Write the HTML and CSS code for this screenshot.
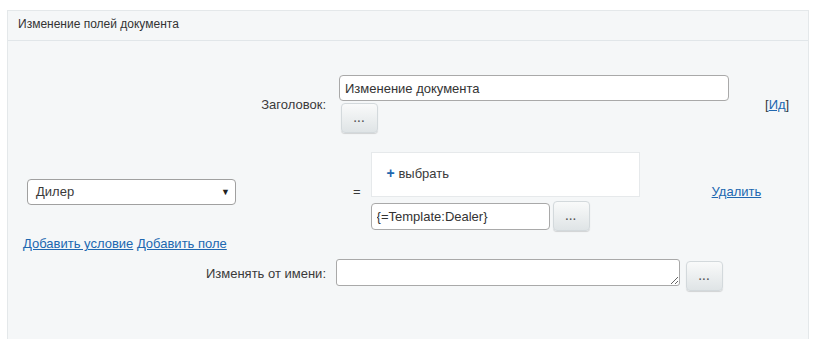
FILE: index.html
```html
<!DOCTYPE html>
<html lang="ru">
<head>
  <meta charset="UTF-8"/>
  <title>Изменение полей документа</title>
  <link rel="stylesheet" href="styles.css">
</head>
<body>
  <div class="panel">
    <div class="panel-head">Изменение полей документа</div>
    <div class="panel-body">
      <div class="row row-title">
        <div class="label">Заголовок:</div>
        <div class="field">
          <input class="text text-title" type="text" value="Изменение документа">
          <button class="btn-dots btn-under">...</button>
        </div>
        <span class="id-link">[<a href="#">Ид</a>]</span>
      </div>
      <div class="row row-cond">
        <div class="select">Дилер<span class="arrow">&#9660;</span></div>
        <div class="eq">=</div>
        <div class="field">
          <div class="picker"><span class="plus">+</span> выбрать</div>
          <div class="inline">
            <input class="text text-value" type="text" value="{=Template:Dealer}">
            <button class="btn-dots">...</button>
          </div>
        </div>
        <a href="#" class="del">Удалить</a>
      </div>
      <div class="add-links"><a href="#">Добавить условие</a> <a href="#">Добавить поле</a></div>
      <div class="row row-user">
        <div class="label">Изменять от имени:</div>
        <textarea class="area"></textarea>
        <button class="btn-dots btn-side">...</button>
      </div>
    </div>
  </div>
</body>
</html>
```

FILE: styles.css
```css
*{margin:0;padding:0;box-sizing:border-box;}
html{background:#fff;}
body{font-family:"Liberation Sans",Arial,sans-serif;font-size:13px;color:#3a3a3a;}
a{color:#2067b0;text-decoration:underline;}
.panel{margin:10px 0 0 7px;width:802px;height:340px;background:#f5f7f8;border:1px solid #e4e8ea;border-bottom:none;}
.panel-head{height:30px;line-height:27px;padding-left:10px;font-size:12px;color:#333;border-bottom:1px solid #e1e6e9;}
.panel-body{padding-top:34px;}
.row{display:flex;align-items:center;}
.label{width:318px;text-align:right;}
.row-title .field{margin-left:13px;width:390px;}
.text{display:block;height:26px;padding:0 5px;font:13px "Liberation Sans",Arial,sans-serif;color:#333;background:#fff;border:1px solid #a9a9a9;border-radius:4px;outline:none;}
.text-title{width:390px;}
.btn-dots{width:37px;height:30px;border:1px solid #d3d9dc;border-radius:4px;background:linear-gradient(#f9fafa,#dfe4e6);box-shadow:0 1px 1px rgba(0,0,0,0.15);font:bold 10px "Liberation Sans",Arial,sans-serif;color:#555;letter-spacing:1px;}
.btn-under{display:block;margin:2px 0 0 2px;}
.id-link{margin-left:36px;}
.row-cond{margin-top:19px;padding-left:19px;}
.select{position:relative;width:209px;height:26px;line-height:24px;padding-left:8px;background:#fff;border:1px solid #a0a0a0;border-radius:4px;}
.select .arrow{position:absolute;right:5px;top:0;font-size:9px;color:#222;}
.eq{margin:0 10px 0 117px;}
.picker{width:269px;height:45px;background:#fff;border:1px solid #e6e9eb;padding:12px 0 0 15px;}
.plus{color:#2067b0;font-weight:bold;font-size:14px;}
.inline{display:flex;align-items:center;margin-top:4px;}
.text-value{width:179px;height:27px;}
.inline .btn-dots{margin-left:3px;}
.del{margin-left:72px;}
.add-links{margin:5px 0 0 15px;}
.row-user{margin-top:8px;align-items:flex-start;}
.row-user .label{margin-top:7px;}
.area{margin-left:10px;width:344px;height:27px;border:1px solid #a9a9a9;border-radius:3px;background:#fff;}
.btn-side{margin:2px 0 0 6px;}
```
